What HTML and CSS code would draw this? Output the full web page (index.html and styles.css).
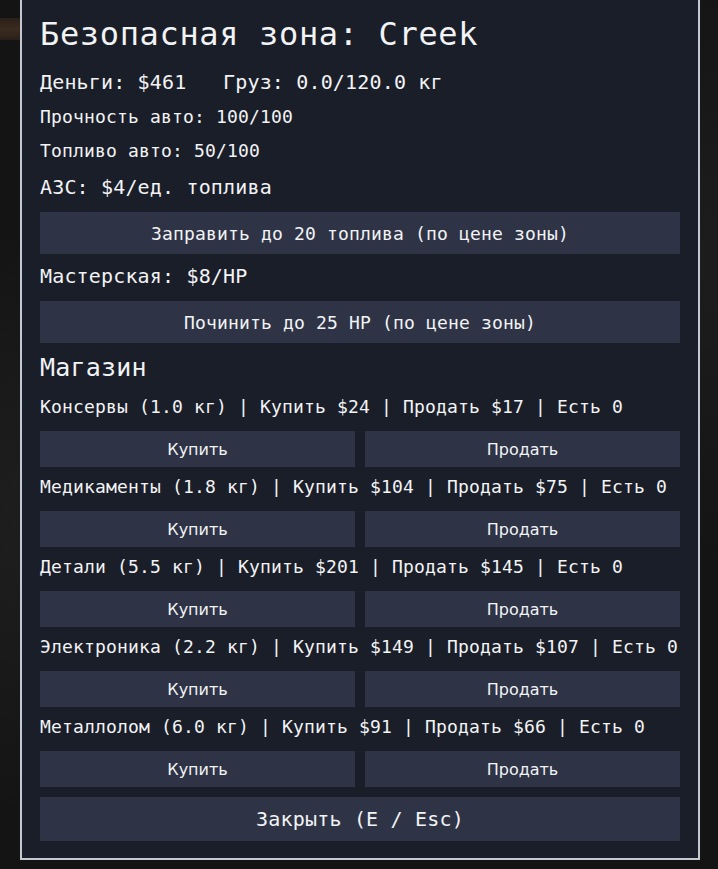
FILE: index.html
```html
<!DOCTYPE html>
<html lang="ru">
<head>
<meta charset="utf-8">
<title>Безопасная зона</title>
<link rel="stylesheet" href="styles.css">
</head>
<body>
<div class="scene">
  <div class="glow"></div>
  <section class="panel">
    <h2 class="title">Безопасная зона: Creek</h2>
    <div class="line big m17">Деньги: $461&nbsp;&nbsp;&nbsp;Груз: 0.0/120.0 кг</div>
    <div class="line m12">Прочность авто: 100/100</div>
    <div class="line m12">Топливо авто: 50/100</div>
    <div class="line big m13">АЗС: $4/ед. топлива</div>
    <button class="wide">Заправить до 20 топлива (по цене зоны)</button>
    <div class="line big m10">Мастерская: $8/HP</div>
    <button class="wide">Починить до 25 HP (по цене зоны)</button>
    <h3 class="shop">Магазин</h3>

    <div class="item">
      <div class="line">Консервы (1.0 кг) | Купить $24 | Продать $17 | Есть 0</div>
      <div class="pair"><button class="small">Купить</button><button class="small">Продать</button></div>
    </div>
    <div class="item">
      <div class="line">Медикаменты (1.8 кг) | Купить $104 | Продать $75 | Есть 0</div>
      <div class="pair"><button class="small">Купить</button><button class="small">Продать</button></div>
    </div>
    <div class="item">
      <div class="line">Детали (5.5 кг) | Купить $201 | Продать $145 | Есть 0</div>
      <div class="pair"><button class="small">Купить</button><button class="small">Продать</button></div>
    </div>
    <div class="item">
      <div class="line">Электроника (2.2 кг) | Купить $149 | Продать $107 | Есть 0</div>
      <div class="pair"><button class="small">Купить</button><button class="small">Продать</button></div>
    </div>
    <div class="item">
      <div class="line">Металлолом (6.0 кг) | Купить $91 | Продать $66 | Есть 0</div>
      <div class="pair"><button class="small">Купить</button><button class="small">Продать</button></div>
    </div>

    <button class="wide close">Закрыть (E / Esc)</button>
  </section>
</div>
</body>
</html>
```

FILE: styles.css
```css
* { box-sizing: border-box; }

html, body {
  margin: 0;
  padding: 0;
  height: 100%;
}

body {
  background: #151515;
  overflow: hidden;
}

.scene {
  position: relative;
  min-height: 869px;
  padding-left: 20px;
  background:
    radial-gradient(ellipse at 10% 60%, #1f1f1f 0%, rgba(0,0,0,0) 40%),
    radial-gradient(ellipse at 95% 30%, #1d1d1d 0%, rgba(0,0,0,0) 35%),
    #141414;
}

.glow {
  position: absolute;
  left: 0;
  top: 18px;
  width: 20px;
  height: 22px;
  background: linear-gradient(180deg, #2a2019 0%, #3b2b1f 50%, #2a2019 100%);
}

.panel {
  position: relative;
  width: 680px;
  background: #1a1e28;
  border: 2px solid #c3c8d1;
  border-top: none;
  padding: 15px 18px 17px 18px;
  color: #f2f3f5;
  font-family: "DejaVu Sans Mono", "Liberation Mono", monospace;
  font-size: 18px;
  letter-spacing: 0.009em;
  display: flex;
  flex-direction: column;
}

.title {
  margin: 0;
  font-size: 32px;
  line-height: 38px;
  font-weight: normal;
  letter-spacing: 0.65px;
}

.line {
  font-size: 18px;
  line-height: 22px;
  white-space: pre;
}

.line.big {
  font-size: 20px;
  line-height: 24px;
}

.m17 { margin-top: 17px; }
.m12 { margin-top: 12px; }
.m13 { margin-top: 13px; }
.m10 { margin-top: 10px; }

button {
  border: none;
  margin: 0;
  padding: 0;
  color: #f2f3f5;
  background: #2e3446;
  font-family: "DejaVu Sans Mono", "Liberation Mono", monospace;
  letter-spacing: 0.009em;
}

.wide {
  margin-top: 13px;
  height: 42px;
  width: 100%;
  font-size: 18px;
}

.shop {
  margin: 10px 0 0 0;
  font-size: 25px;
  line-height: 30px;
  font-weight: normal;
  letter-spacing: 0.2px;
}

.item {
  margin-top: 13px;
  display: flex;
  flex-direction: column;
}

.item + .item { margin-top: 9px; }

.pair {
  margin-top: 13px;
  display: flex;
  gap: 10px;
}

.small {
  flex: 1;
  height: 36px;
  font-family: "DejaVu Sans", "Noto Sans", sans-serif;
  font-size: 16px;
  letter-spacing: 0;
}

.close {
  margin-top: 10px;
  height: 44px;
  font-size: 20px;
}
```
